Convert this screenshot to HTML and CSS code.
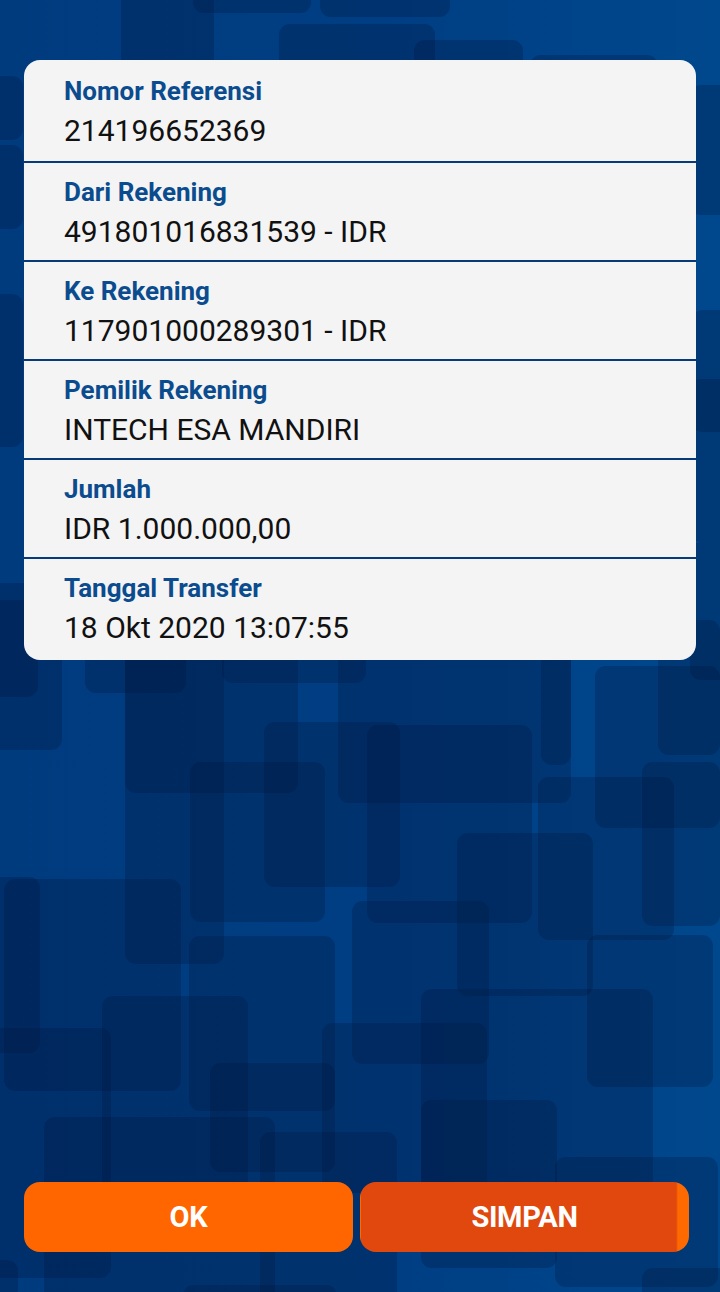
FILE: index.html
```html
<!DOCTYPE html>
<html lang="id">
<head>
<meta charset="utf-8">
<title>Bukti Transfer</title>
<link rel="stylesheet" href="styles.css">
</head>
<body>
<div class="screen">
  <div class="bg" aria-hidden="true">
    <span class="tile" style="left:193px;top:-20px;width:118px;height:33px"></span>
    <span class="tile" style="left:320px;top:-20px;width:130px;height:37px"></span>
    <span class="tile" style="left:279px;top:24px;width:156px;height:120px"></span>
    <span class="tile" style="left:414px;top:40px;width:109px;height:100px"></span>
    <span class="tile" style="left:530px;top:55px;width:128px;height:100px"></span>
    <span class="tile" style="left:121px;top:-20px;width:93px;height:120px"></span>
    <span class="tile" style="left:-20px;top:76px;width:43px;height:64px"></span>
    <span class="tile" style="left:-20px;top:145px;width:43px;height:84px"></span>
    <span class="tile" style="left:-20px;top:294px;width:43px;height:153px"></span>
    <span class="tile" style="left:-20px;top:583px;width:58px;height:114px"></span>
    <span class="tile" style="left:690px;top:85px;width:50px;height:130px"></span>
    <span class="tile" style="left:692px;top:310px;width:50px;height:122px"></span>
    <span class="tile" style="left:690px;top:379px;width:50px;height:163px"></span>
    <span class="tile" style="left:690px;top:542px;width:50px;height:138px"></span>
    <span class="tile" style="left:-20px;top:600px;width:82px;height:150px"></span>
    <span class="tile" style="left:85px;top:600px;width:101px;height:93px"></span>
    <span class="tile" style="left:125px;top:620px;width:173px;height:173px"></span>
    <span class="tile" style="left:125px;top:640px;width:99px;height:324px"></span>
    <span class="tile" style="left:222px;top:620px;width:144px;height:63px"></span>
    <span class="tile" style="left:264px;top:722px;width:136px;height:165px"></span>
    <span class="tile" style="left:190px;top:762px;width:135px;height:160px"></span>
    <span class="tile" style="left:338px;top:620px;width:233px;height:183px"></span>
    <span class="tile" style="left:367px;top:725px;width:165px;height:198px"></span>
    <span class="tile" style="left:541px;top:620px;width:30px;height:145px"></span>
    <span class="tile" style="left:595px;top:666px;width:125px;height:162px"></span>
    <span class="tile" style="left:658px;top:620px;width:62px;height:135px"></span>
    <span class="tile" style="left:538px;top:777px;width:136px;height:163px"></span>
    <span class="tile" style="left:642px;top:762px;width:78px;height:164px"></span>
    <span class="tile" style="left:457px;top:833px;width:136px;height:163px"></span>
    <span class="tile" style="left:352px;top:901px;width:137px;height:163px"></span>
    <span class="tile" style="left:4px;top:879px;width:177px;height:212px"></span>
    <span class="tile" style="left:-20px;top:877px;width:60px;height:176px"></span>
    <span class="tile" style="left:189px;top:936px;width:146px;height:175px"></span>
    <span class="tile" style="left:587px;top:935px;width:126px;height:152px"></span>
    <span class="tile" style="left:421px;top:989px;width:232px;height:200px"></span>
    <span class="tile" style="left:322px;top:1023px;width:165px;height:170px"></span>
    <span class="tile" style="left:102px;top:996px;width:146px;height:200px"></span>
    <span class="tile" style="left:-20px;top:1028px;width:131px;height:250px"></span>
    <span class="tile" style="left:210px;top:1063px;width:125px;height:109px"></span>
    <span class="tile" style="left:44px;top:1117px;width:231px;height:200px"></span>
    <span class="tile" style="left:260px;top:1132px;width:137px;height:180px"></span>
    <span class="tile" style="left:555px;top:1157px;width:163px;height:130px"></span>
    <span class="tile" style="left:421px;top:1100px;width:136px;height:168px"></span>
    <span class="tile" style="left:183px;top:1285px;width:154px;height:30px"></span>
    <span class="tile" style="left:642px;top:1268px;width:98px;height:40px"></span>
    <span class="tile" style="left:-20px;top:1260px;width:38px;height:40px"></span>
  </div>

  <section class="card">
    <div class="row">
      <div class="label">Nomor Referensi</div>
      <div class="value">214196652369</div>
    </div>
    <div class="row">
      <div class="label">Dari Rekening</div>
      <div class="value">491801016831539 - IDR</div>
    </div>
    <div class="row">
      <div class="label">Ke Rekening</div>
      <div class="value">117901000289301 - IDR</div>
    </div>
    <div class="row">
      <div class="label">Pemilik Rekening</div>
      <div class="value">INTECH ESA MANDIRI</div>
    </div>
    <div class="row">
      <div class="label">Jumlah</div>
      <div class="value">IDR 1.000.000,00</div>
    </div>
    <div class="row">
      <div class="label">Tanggal Transfer</div>
      <div class="value">18 Okt 2020 13:07:55</div>
    </div>
  </section>

  <div class="actions">
    <button class="btn btn-ok" type="button">OK</button>
    <button class="btn btn-save" type="button">SIMPAN</button>
  </div>
</div>
</body>
</html>
```

FILE: styles.css
```css
* { box-sizing: border-box; }

html, body {
  margin: 0;
  padding: 0;
}

body {
  font-family: Roboto, "Noto Sans", "Liberation Sans", sans-serif;
  background: #003c80;
}

.screen {
  position: relative;
  width: 720px;
  height: 1292px;
  overflow: hidden;
  display: flex;
  flex-direction: column;
  background: linear-gradient(to right, #003b7e 0%, #003e83 55%, #00488d 100%);
}

.bg {
  position: absolute;
  inset: 0;
  z-index: 0;
}

.tile {
  position: absolute;
  display: block;
  border-radius: 11px;
  background: rgba(0, 22, 62, 0.28);
}

.card {
  position: relative;
  z-index: 1;
  margin: 60px 24px 0;
  background: #f4f4f4;
  border-radius: 16px;
  overflow: hidden;
}

.row {
  padding: 14px 40px 10px;
  border-top: 2px solid #073a7a;
}

.row:first-child {
  border-top: none;
  padding-top: 16px;
  padding-bottom: 12px;
}

.row:last-child {
  padding-bottom: 14px;
}

.label {
  font-size: 26px;
  line-height: 30px;
  font-weight: 700;
  color: #0b4c8f;
}

.value {
  margin-top: 7px;
  font-size: 30px;
  line-height: 36px;
  font-weight: 400;
  color: #111111;
}

.actions {
  position: relative;
  z-index: 1;
  margin-top: auto;
  padding: 0 31px 40px 24px;
  display: flex;
  gap: 7px;
}

.btn {
  flex: 1 1 0;
  height: 70px;
  border: none;
  border-radius: 16px;
  font-family: Roboto, "Noto Sans", "Liberation Sans", sans-serif;
  font-size: 29px;
  font-weight: 700;
  color: #ffffff;
  letter-spacing: -0.3px;
  padding: 0;
}

.btn-ok {
  background: #ff6600;
}

.btn-save {
  background: linear-gradient(to right, #ff6a00 0, #ff6a00 1px, #e0480e 1px, #e0480e calc(100% - 13px), #ff6a00 calc(100% - 11px));
}
```
